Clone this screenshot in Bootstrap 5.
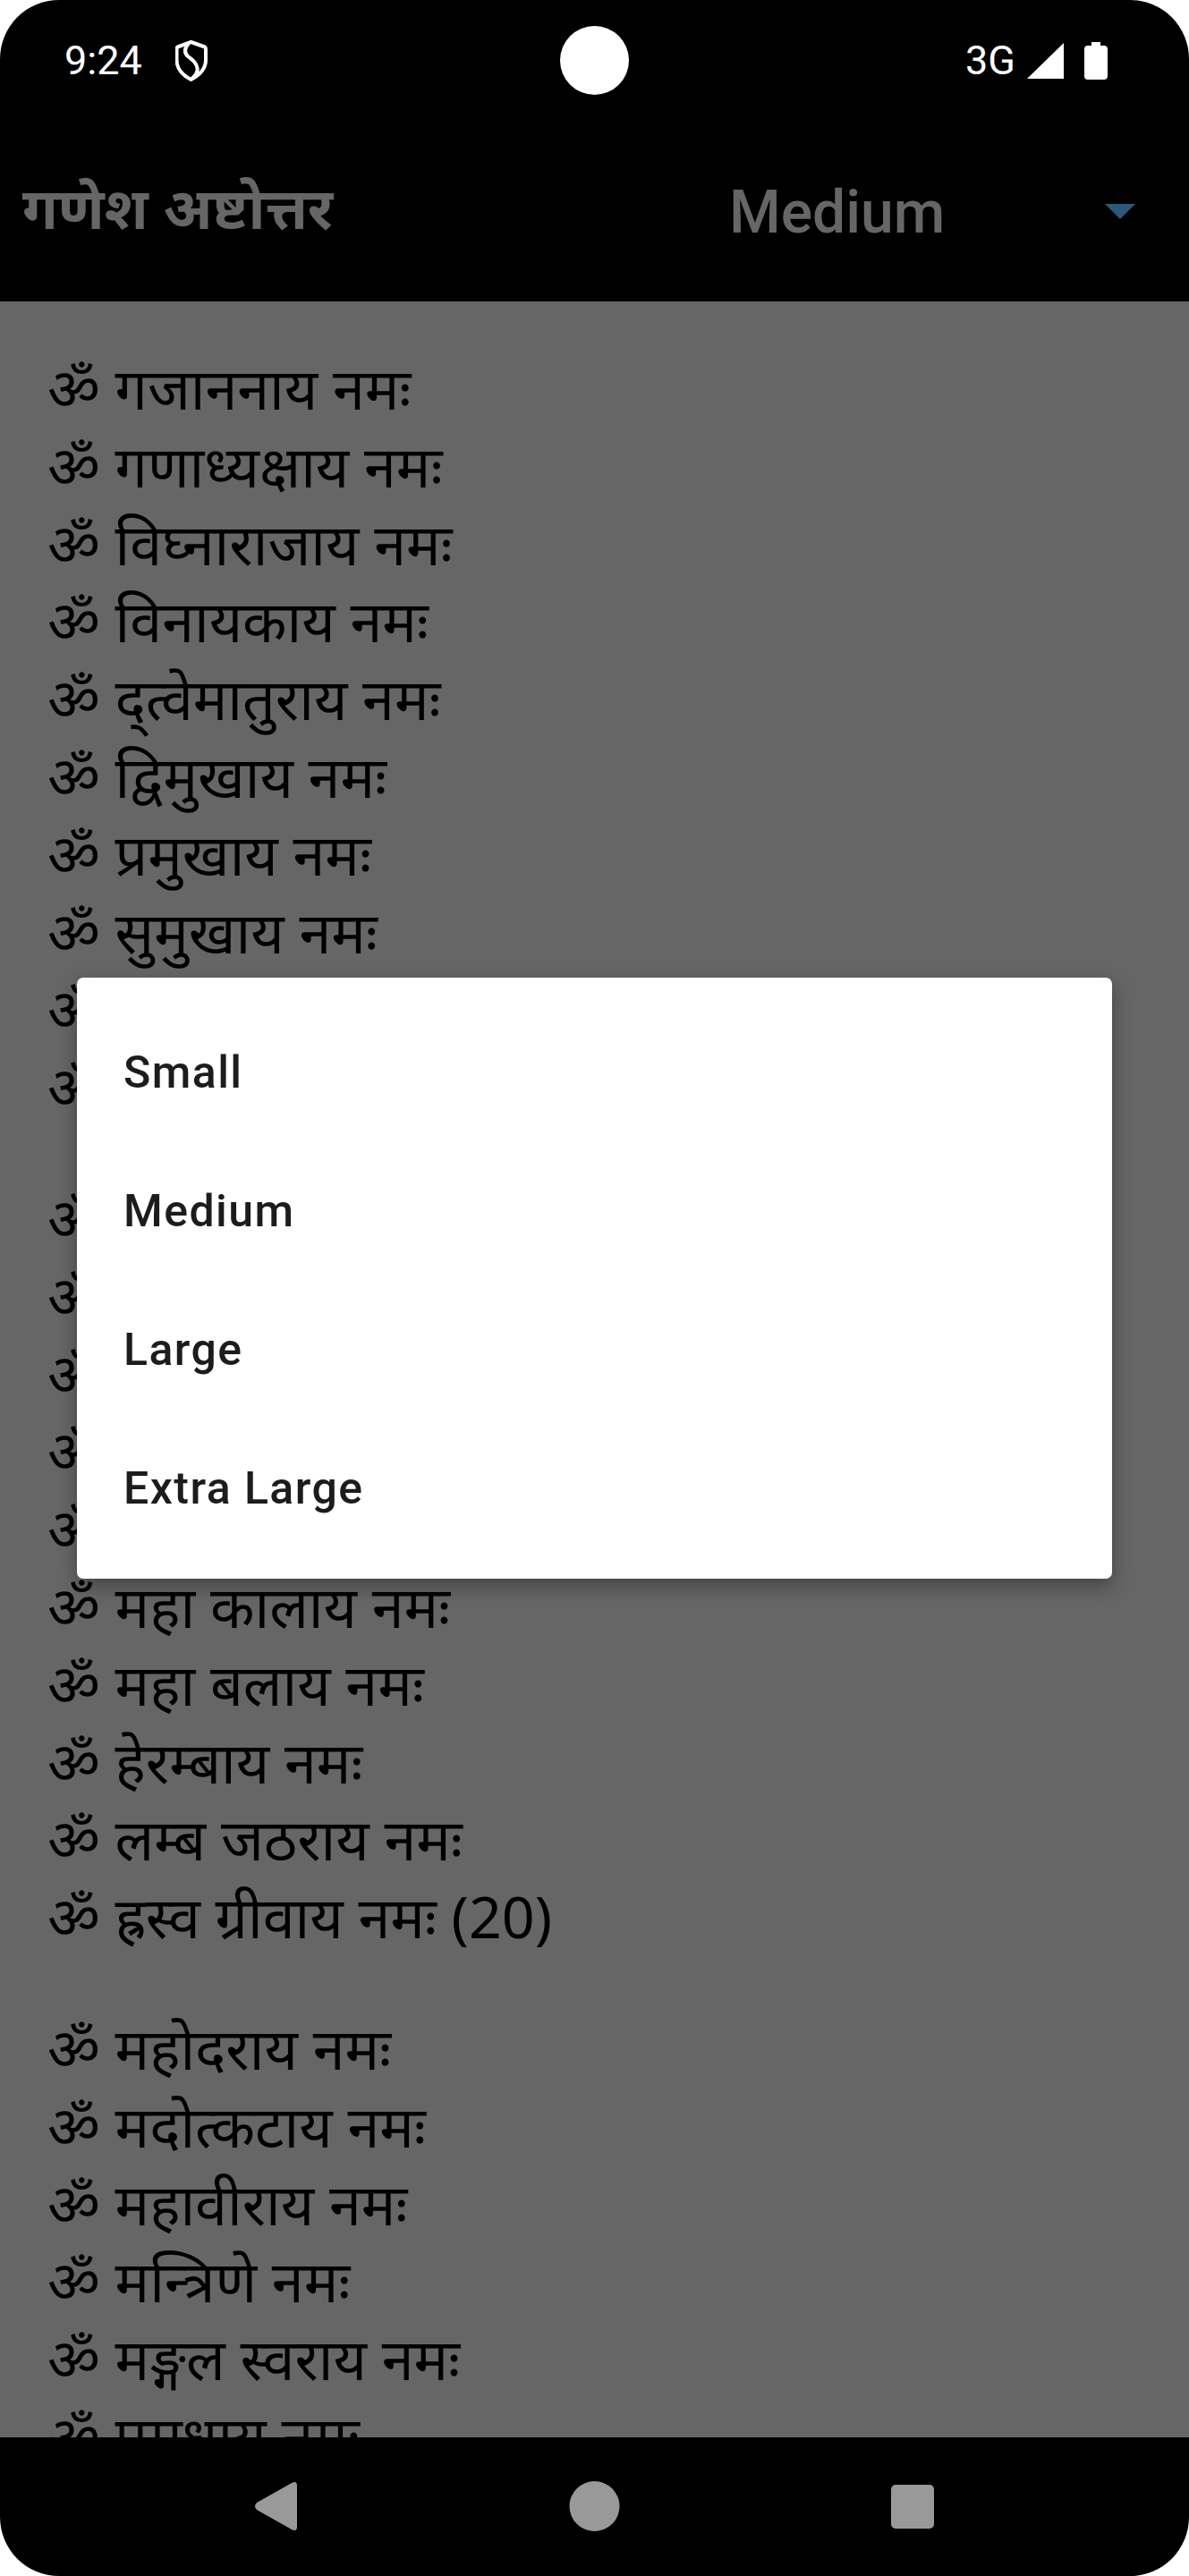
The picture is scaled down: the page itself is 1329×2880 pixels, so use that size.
<!DOCTYPE html>
<html lang="hi">
<head>
<meta charset="utf-8">
<title>गणेश अष्टोत्तर</title>
<link href="https://cdn.jsdelivr.net/npm/bootstrap@5.3.0/dist/css/bootstrap.min.css" rel="stylesheet">
<style>
html,body{margin:0;background:#fff;}
.phone{width:1329px;height:2880px;background:#000;border-radius:66px;overflow:hidden;position:relative;font-family:"Noto Sans",sans-serif;}
.statusbar{height:135px;padding:0 72px;color:#fff;font-family:Roboto,sans-serif;font-size:45px;grid-template-columns:1fr auto 1fr;align-items:center;flex:none;}
.status-left{gap:37px;}
.status-right{padding-right:19px;}
.signal-icon{margin-left:13px;}
.battery-icon{margin-left:23px;}
.camerahole{width:77px;height:77px;border-radius:50%;background:#fff;}
.appbar{height:202px;padding:0 60px 0 25px;flex:none;}
.apptitle{font-size:64.5px;font-weight:700;margin:0 0 10px;line-height:1;color:#666;}
.spinner-label{font-family:Roboto,sans-serif;font-weight:500;font-size:66px;color:#666;width:420px;margin-top:3px;}
.spin-arrow{width:34px;height:17px;}
.pagebody{flex:1 1 0;min-height:0;overflow:hidden;background:#666;color:#000;padding:53px 0 0 53px;font-size:64.5px;line-height:86.8px;}
.verse-group{margin-bottom:60px;}
.verse-line{white-space:nowrap;}
.navbar-bottom{height:155px;flex:none;}
.size-menu{position:absolute;left:86px;top:1093px;width:1157px;height:672px;border:0;border-radius:7px;box-shadow:0 8px 22px rgba(0,0,0,.35);padding:29px 0 25px;overflow:hidden;}
.size-menu .list-group-item{border:0;height:155px;padding:0 52px;display:flex;align-items:center;font-family:Roboto,sans-serif;font-weight:500;font-size:50px;letter-spacing:1.45px;color:#1c1c1c;background:#fff;}
</style>
</head>
<body>
<div class="phone d-flex flex-column">
  <div class="statusbar d-grid">
    <div class="status-left d-flex align-items-center">
      <span>9:24</span>
      <svg width="36" height="46" viewBox="0 0 36 46"><path d="M17.5 2 L33 7.5 Q34 8 34 10 V22 C34 32 27 39 17.5 44 C8 39 1.5 32 1.5 22 V10 Q1.5 8 2.5 7.5 Z" fill="none" stroke="#fff" stroke-width="4" stroke-linejoin="round"/><path d="M14.7 4 C10 9 10 14 14 18 C19 22 24 25 24.7 32 C25 37 22 40 18 43.5" fill="none" stroke="#fff" stroke-width="4"/></svg>
    </div>
    <div class="camerahole"></div>
    <div class="status-right d-flex align-items-center justify-content-end">
      <span>3G</span>
      <svg class="signal-icon" width="41" height="40" viewBox="0 0 41 40"><path d="M41 0 V40 H0 Z" fill="#fff"/></svg>
      <svg class="battery-icon" width="26" height="42" viewBox="0 0 26 42"><path d="M8 0 H18 V4 H22 Q26 4 26 8 V38 Q26 42 22 42 H4 Q0 42 0 38 V8 Q0 4 4 4 H8 Z" fill="#fff"/></svg>
    </div>
  </div>
  <div class="appbar d-flex align-items-center justify-content-between">
    <h1 class="apptitle">गणेश अष्टोत्तर</h1>
    <div class="d-flex align-items-center">
      <span class="spinner-label">Medium</span>
      <svg class="spin-arrow" viewBox="0 0 34 17"><path d="M0 0 H34 L17 17 Z" fill="#2a5a78"/></svg>
    </div>
  </div>
  <main class="pagebody">
    <div class="verse-group">
      <div class="verse-line">ॐ गजाननाय नमः</div>
      <div class="verse-line">ॐ गणाध्यक्षाय नमः</div>
      <div class="verse-line">ॐ विघ्नाराजाय नमः</div>
      <div class="verse-line">ॐ विनायकाय नमः</div>
      <div class="verse-line">ॐ द्त्वेमातुराय नमः</div>
      <div class="verse-line">ॐ द्विमुखाय नमः</div>
      <div class="verse-line">ॐ प्रमुखाय नमः</div>
      <div class="verse-line">ॐ सुमुखाय नमः</div>
      <div class="verse-line">ॐ कृतिने नमः</div>
      <div class="verse-line">ॐ सुप्रदीपाय नमः (10)</div>
    </div>
    <div class="verse-group">
      <div class="verse-line">ॐ सुखनिधये नमः</div>
      <div class="verse-line">ॐ सुराध्यक्षाय नमः</div>
      <div class="verse-line">ॐ सुरारिघ्नाय नमः</div>
      <div class="verse-line">ॐ महागणपतये नमः</div>
      <div class="verse-line">ॐ मान्याय नमः</div>
      <div class="verse-line">ॐ महा कालाय नमः</div>
      <div class="verse-line">ॐ महा बलाय नमः</div>
      <div class="verse-line">ॐ हेरम्बाय नमः</div>
      <div class="verse-line">ॐ लम्ब जठराय नमः</div>
      <div class="verse-line">ॐ ह्रस्व ग्रीवाय नमः (20)</div>
    </div>
    <div class="verse-group">
      <div class="verse-line">ॐ महोदराय नमः</div>
      <div class="verse-line">ॐ मदोत्कटाय नमः</div>
      <div class="verse-line">ॐ महावीराय नमः</div>
      <div class="verse-line">ॐ मन्त्रिणे नमः</div>
      <div class="verse-line">ॐ मङ्गल स्वराय नमः</div>
      <div class="verse-line">ॐ प्रमधाय नमः</div>
    </div>
  </main>
  <div class="navbar-bottom">
    <svg class="d-block" width="1329" height="155" viewBox="0 0 1329 155">
      <path d="M332 54 Q332 48 326 51 L287 73 Q283 77 287 81 L326 103 Q332 106 332 100 Z" fill="#999"/>
      <circle cx="664.5" cy="77" r="28" fill="#999"/>
      <rect x="996" y="53" width="48" height="49" rx="5" fill="#999"/>
    </svg>
  </div>
  <div class="card size-menu">
    <div class="list-group list-group-flush">
      <div class="list-group-item">Small</div>
      <div class="list-group-item">Medium</div>
      <div class="list-group-item">Large</div>
      <div class="list-group-item">Extra Large</div>
    </div>
  </div>
</div>
<script src="https://cdn.jsdelivr.net/npm/bootstrap@5.3.0/dist/js/bootstrap.bundle.min.js"></script>
</body>
</html>
